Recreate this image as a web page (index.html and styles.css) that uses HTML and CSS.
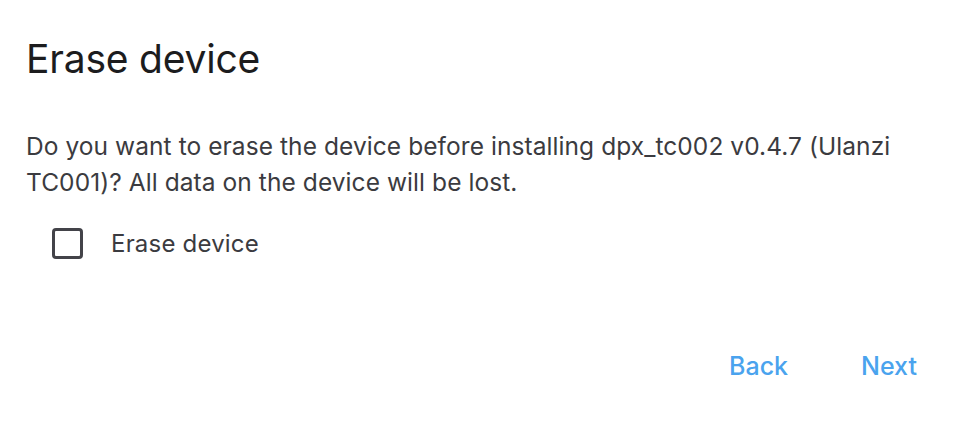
FILE: index.html
```html
<!DOCTYPE html>
<html>
<head>
<meta charset="utf-8">
<link rel="stylesheet" href="styles.css">
</head>
<body>
<div class="dialog">
  <h1 class="title">Erase device</h1>
  <p class="text">Do you want to erase the device before installing dpx_tc002 v0.4.7 (Ulanzi TC001)? All data on the device will be lost.</p>
  <label class="check">
    <span class="box"></span>
    <span class="label">Erase device</span>
  </label>
  <div class="actions">
    <button class="btn">Back</button>
    <button class="btn">Next</button>
  </div>
</div>
</body>
</html>
```
FILE: styles.css
```css
html, body {
  margin: 0;
  padding: 0;
  background: #ffffff;
}
body {
  font-family: Inter, "Noto Sans", sans-serif;
  width: 956px;
  height: 426px;
  overflow: hidden;
}
.dialog {
  padding: 0 26px;
  display: flex;
  flex-direction: column;
}
.title {
  margin: 34px 0 0;
  font-size: 39px;
  font-weight: 400;
  line-height: 50px;
  color: #1c1c1e;
  letter-spacing: -0.2px;
}
.text {
  margin: 44px 0 0;
  font-size: 24.5px;
  line-height: 36px;
  letter-spacing: 0.07px;
  color: #3b3b40;
  max-width: 880px;
}
.check {
  display: flex;
  align-items: center;
  margin: 23px 0 0 26px;
  height: 40px;
}
.box {
  width: 25px;
  height: 25px;
  border: 3px solid #434349;
  border-radius: 4px;
}
.label {
  margin-left: 28px;
  font-size: 24px;
  letter-spacing: 0.2px;
  color: #3b3b40;
}
.actions {
  display: flex;
  justify-content: flex-end;
  gap: 73px;
  margin-top: 88px;
  padding-right: 13px;
}
.btn {
  background: none;
  border: 0;
  padding: 0;
  font-family: inherit;
  font-size: 25px;
  font-weight: 500;
  color: #4aa3ee;
  line-height: 30px;
}
```
